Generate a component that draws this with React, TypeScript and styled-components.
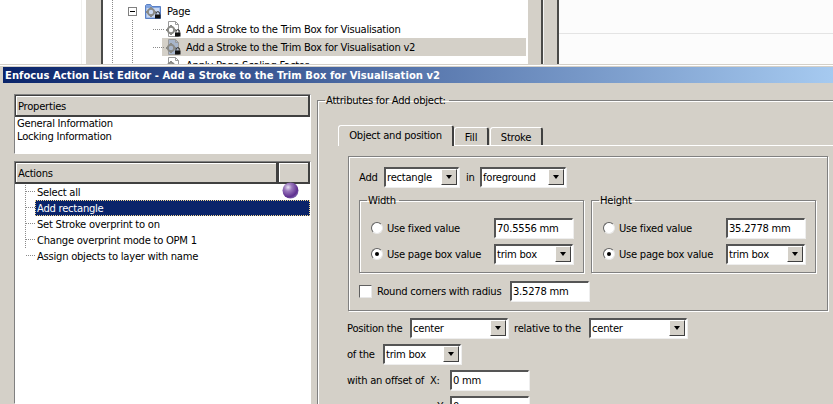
import React from "react";
import styled, { createGlobalStyle } from "styled-components";

const Global = createGlobalStyle`
  html, body { margin: 0; padding: 0; background: #d4d0c8; }
  * { box-sizing: border-box; }
`;
const Page = styled.div`
  width: 833px; height: 404px; overflow: hidden; display: flex; flex-direction: column;
  font: 10px/13px "DejaVu Sans", sans-serif; letter-spacing: -0.25px; color: #000;
`;
const BackDrop = styled.div`
  height: 64px; flex: none; display: flex; background: #fff; overflow: hidden;
`;
const BlankLeft = styled.div`width: 81px; flex: none; background: #fff; border-right: 1px solid #f0f0ee; margin-right: 4px; width: 82px;`;
const BackGutter = styled.div<{ $w: number; $edge?: boolean }>`
  width: ${p => p.$w}px; flex: none; background: #d4d0c8;
  border-right: 2px solid #4a4a48;
  ${p => (p.$edge ? "border-left: 1px solid #f4f4f2;" : "")}
`;
const Tree = styled.div`
  width: 425px; flex: none; background-color: #fff; padding-top: 2px; border-right: 2px solid #fff;
  background-image:
    repeating-linear-gradient(to bottom, #8a8a8a 0 1px, transparent 1px 2px),
    repeating-linear-gradient(to bottom, #8a8a8a 0 1px, transparent 1px 2px);
  background-size: 1px 100%, 1px 100%;
  background-position: 9px 0, 29px 20px;
  background-repeat: no-repeat;
`;
const TreeRow = styled.div<{ $selected?: boolean; $indent: number; $pad?: number }>`
  height: 18px; display: flex; align-items: center; margin-left: ${p => p.$indent}px;
  padding-left: ${p => p.$pad ?? 0}px;
  background: ${p => (p.$selected ? "#d4d0c8" : "transparent")};
  white-space: nowrap;
`;
const Expander = styled.span`
  width: 9px; height: 9px; border: 1px solid #808080; background: #fff; display: flex;
  align-items: center; justify-content: center; margin-right: 8px; flex: none;
  &::before { content: ""; width: 5px; height: 1px; background: #000; }
`;
const IconSlot = styled.span`width: 16px; height: 16px; flex: none; display: block;`;
const Dash = styled.span`
  width: 12px; height: 1px; flex: none; margin-left: -12px;
  background: repeating-linear-gradient(to right, #8a8a8a 0 1px, transparent 1px 2px);
`;
const TreeLabel = styled.span<{ $gap: number }>`margin-left: ${p => p.$gap}px;`;
const RightBack = styled.div`
  flex: 1; background: #fcfcfc; position: relative;
  &::after { content: ""; display: block; margin-top: 33px; height: 1px; background: #e4e4e4; }
`;
const Window = styled.div`
  flex: 1; min-height: 0; display: flex; flex-direction: column; background: #d4d0c8;
  padding: 1px 0 0 0; border-top: 1px solid #d4d0c8; position: relative;
  box-shadow: inset 0 1px 0 #fff;
`;
const TitleBar = styled.div`
  margin: 1px 0 0 3px; height: 16px; flex: none; display: flex; align-items: center; padding-left: 2px;
  color: #fff; font: 700 10px/13px "DejaVu Sans", sans-serif; letter-spacing: 0.05px; white-space: nowrap;
  background: linear-gradient(to right, #0a246a, #a6caf0);
`;
const Body = styled.div`
  flex: 1; min-height: 0; display: flex; padding: 11px 0 0 14px; gap: 6px; overflow: hidden;
`;
const LeftColumn = styled.div`width: 297px; flex: none; display: flex; flex-direction: column; gap: 7px;`;
const ListBox = styled.div<{ $h?: number }>`
  ${p => (p.$h ? `height: ${p.$h}px;` : "flex: 1;")}
  border: 1px solid; border-color: #808080 #fff #fff #808080; background: #fff;
  display: flex; flex-direction: column;
`;
const HeaderRow = styled.div`display: flex; height: 22px; flex: none;`;
const HeaderCell = styled.div<{ $w?: number }>`
  ${p => (p.$w ? `width: ${p.$w}px; flex: none;` : "flex: 1;")}
  background: #d4d0c8; padding: 3px 0 0 2px; line-height: 15px;
  border: 1px solid; border-color: #404040; border-width: 1px 2px 2px 1px;
  box-shadow: inset 1px 1px 0 #fff;
`;
const PlainRow = styled.div`height: 13px; padding-left: 2px; line-height: 13px; white-space: nowrap;`;
const PlainList = styled.div`margin-top: 0;`;
const ActionList = styled.div`
  flex: 1; position: relative; padding-left: 20px;
  background-image: repeating-linear-gradient(to bottom, #8a8a8a 0 1px, transparent 1px 2px);
  background-size: 1px 64px; background-position: 10px 1px; background-repeat: no-repeat;
`;
const ActionRow = styled.div<{ $selected?: boolean }>`
  height: 16px; display: flex; align-items: center; padding-left: 2px; white-space: nowrap; position: relative;
  ${p => p.$selected ? `background: #0a246a; color: #fff; outline: 1px dotted #f3d88f; outline-offset: -1px;` : ""}
  &::before {
    content: ""; position: absolute; left: -9px; top: 7px; width: 9px; height: 1px;
    background: repeating-linear-gradient(to right, #8a8a8a 0 1px, transparent 1px 2px);
  }
`;
const Sphere = styled.svg`position: absolute; right: 11px; top: -2px; width: 17px; height: 17px;`;
const RightColumn = styled.div`flex: 1; min-width: 0;`;
const Group = styled.fieldset`
  margin: 0; padding: 0; min-width: 0; border: 1px solid #808080;
  box-shadow: 1px 1px 0 #fff, inset 1px 1px 0 #fff;
`;
const Legend = styled.legend`padding: 0 3px 0 1px; line-height: 13px; height: 13px;`;
const AttributesLegend = styled(Legend)`margin-left: -13px;`;
const SizeLegend = styled(Legend)`margin-left: -3px;`;
const Attributes = styled(Group)`
  margin-right: -30px; height: 340px; padding: 19px 36px 0 20px;
`;
const TabStrip = styled.div`
  display: flex; height: 20px; align-items: flex-end; margin-right: -20px;
  border-bottom: 1px solid #fff;
`;
const Tab = styled.div<{ $active?: boolean; $w: number }>`
  width: ${p => p.$w}px; height: 18px; text-align: center; flex: none;
  line-height: 19px; background: #d4d0c8;
  border: 1px solid; border-color: #fff #404040 transparent #fff; border-width: 1px 2px 0 1px;
  border-radius: 3px 3px 0 0; margin-right: ${p => (p.$active ? 0 : 1)}px;
  ${p => p.$active ? "margin-bottom: -1px; height: 21px;" : ""}
`;
const ObjectGroup = styled.div`
  margin: 10px 0 0 10px; width: 480px; height: 155px; padding: 10px 10px 0 10px;
  border: 1px solid #808080; box-shadow: 1px 1px 0 #fff, inset 1px 1px 0 #fff;
`;
const FormRow = styled.div<{ $gap?: number; $top?: number; $left?: number }>`
  display: flex; align-items: center; gap: ${p => p.$gap ?? 0}px;
  margin-top: ${p => p.$top ?? 0}px; margin-left: ${p => p.$left ?? 0}px; white-space: nowrap;
`;
const FormLabel = styled.span<{ $w: number; $before?: number; $right?: boolean }>`
  width: ${p => p.$w}px; flex: none; margin-left: ${p => p.$before ?? 0}px;
  ${p => (p.$right ? "text-align: right; padding-right: 5px;" : "")}
`;
const Sunken = styled.div<{ $w: number }>`
  width: ${p => p.$w}px; height: 20px; flex: none; display: flex; align-items: center; background: #fff;
  border: 2px solid; border-color: #555 #fff #fff #555; border-width: 2px 1px 1px 2px;
  padding-left: 1px; box-shadow: 1px 1px 0 #eee;
  position: relative; line-height: 15px;
`;
const Arrow = styled.span`
  position: absolute; right: 1px; top: 0; bottom: 1px; width: 16px; background: #d4d0c8;
  border: 1px solid; border-color: #fff #404040 #404040 #fff;
  display: flex; align-items: center; justify-content: center;
  &::after { content: ""; border: 3.5px solid transparent; border-top: 4px solid #000; border-bottom: 0; }
`;
const SizeGroups = styled.div`display: flex; gap: 7px; margin-top: 7px;`;
const SizeGroup = styled(Group)`
  width: 225px; height: 79px; padding: 4px 0 0 10px;
`;
const Radio = styled.span<{ $on?: boolean }>`
  width: 12px; height: 12px; border-radius: 50%; background: #fff; flex: none; display: flex;
  align-items: center; justify-content: center; margin-right: 4px;
  border: 1px solid; border-color: #606060 #e8e8e8 #e8e8e8 #606060;
  &::after { content: ""; width: 4px; height: 4px; border-radius: 50%; background: ${p => (p.$on ? "#000" : "transparent")}; }
`;
const RadioText = styled.span`width: 107px; flex: none;`;
const Check = styled.span`
  width: 13px; height: 13px; background: #fff; flex: none;
  border: 1px solid; border-color: #606060 #e8e8e8 #e8e8e8 #606060;
`;
const Position = styled.div`margin-top: 7px; margin-left: 9px;`;

const Gear = () => (
  <g fill="#8a8a86">
    <circle cx="6" cy="9" r="3.2" fill="none" stroke="#8a8a86" strokeWidth="2" />
    <path d="M5 4h2v2H5zM5 12h2v2H5zM1 8h2v2H1zM9 8h2v2H9z" />
  </g>
);
const Lock = () => (
  <g>
    <path d="M11 11.500v-1a1.800 1.800 0 0 1 3.600 0v1" fill="none" stroke="#222" />
    <rect x="10" y="11.500" width="5.500" height="4" fill="#111" />
  </g>
);
const FolderIcon = () => (
  <IconSlot as="svg" viewBox="0 0 16 16">
    <path d="M.5 2.500l1-1h4l1.500 2h8.500v12h-15z" fill="#7fa3e0" stroke="#5a80c5" />
    <rect x="1.500" y="5" width="13" height="9.500" fill="#c8d8f4" />
    <Gear /><Lock />
  </IconSlot>
);
const DocIcon = ({ $dark }: { $dark?: boolean }) => (
  <IconSlot as="svg" viewBox="0 0 16 16">
    <path d="M3.500.5h7l3 3v12h-10z" fill={$dark ? "#a8b6cc" : "#fff"} stroke="#9a9a9a" />
    <path d="M10.500.5v3h3" fill="none" stroke="#9a9a9a" />
    <Gear /><Lock />
  </IconSlot>
);

const Select = ({ w, children }: { w: number; children: React.ReactNode }) => (
  <Sunken $w={w}>{children}<Arrow /></Sunken>
);

const SizeBox = ({ title, value }: { title: string; value: string }) => (
  <SizeGroup>
    <SizeLegend>{title}</SizeLegend>
    <FormRow $top={7} $left={1}>
      <Radio /><RadioText>Use fixed value</RadioText><Sunken $w={79}>{value}</Sunken>
    </FormRow>
    <FormRow $top={6} $left={1}>
      <Radio $on /><RadioText>Use page box value</RadioText><Select w={79}>trim box</Select>
    </FormRow>
  </SizeGroup>
);

export default function App() {
  return (
    <Page>
      <Global />
      <BackDrop>
        <BlankLeft />
        <BackGutter $w={17} />
        <Tree>
          <TreeRow $indent={25}><Expander /><FolderIcon /><TreeLabel $gap={6}>Page</TreeLabel></TreeRow>
          <TreeRow $indent={59} $pad={3}><Dash /><DocIcon /><TreeLabel $gap={5}>Add a Stroke to the Trim Box for Visualisation</TreeLabel></TreeRow>
          <TreeRow $indent={59} $pad={3} $selected><Dash /><DocIcon $dark /><TreeLabel $gap={5}>Add a Stroke to the Trim Box for Visualisation v2</TreeLabel></TreeRow>
          <TreeRow $indent={59} $pad={3}><Dash /><DocIcon /><TreeLabel $gap={5}>Apply Page Scaling Factor</TreeLabel></TreeRow>
        </Tree>
        <BackGutter $w={15} />
        <BackGutter $w={16} $edge />
        <RightBack />
      </BackDrop>
      <Window>
        <TitleBar>Enfocus Action List Editor - Add a Stroke to the Trim Box for Visualisation v2</TitleBar>
        <Body>
          <LeftColumn>
            <ListBox $h={60}>
              <HeaderRow><HeaderCell>Properties</HeaderCell></HeaderRow>
              <PlainList>
                <PlainRow>General Information</PlainRow>
                <PlainRow>Locking Information</PlainRow>
              </PlainList>
            </ListBox>
            <ListBox>
              <HeaderRow><HeaderCell>Actions</HeaderCell><HeaderCell $w={32} /></HeaderRow>
              <ActionList>
                <ActionRow>
                  Select all
                  <Sphere viewBox="0 0 17 17">
                    <defs>
                      <radialGradient id="orb" cx="0.35" cy="0.3" r="0.8">
                        <stop offset="0" stopColor="#e8e4f4" />
                        <stop offset="0.3" stopColor="#9a78bc" />
                        <stop offset="0.75" stopColor="#5e2f90" />
                        <stop offset="1" stopColor="#8d7cb8" />
                      </radialGradient>
                    </defs>
                    <circle cx="8.500" cy="8.500" r="8" fill="url(#orb)" />
                  </Sphere>
                </ActionRow>
                <ActionRow $selected>Add rectangle</ActionRow>
                <ActionRow>Set Stroke overprint to on</ActionRow>
                <ActionRow>Change overprint mode to OPM 1</ActionRow>
                <ActionRow>Assign objects to layer with name</ActionRow>
              </ActionList>
            </ListBox>
          </LeftColumn>
          <RightColumn>
            <Attributes>
              <AttributesLegend>Attributes for Add object:</AttributesLegend>
              <TabStrip>
                <Tab $active $w={116}>Object and position</Tab>
                <Tab $w={35}>Fill</Tab>
                <Tab $w={53}>Stroke</Tab>
              </TabStrip>
              <ObjectGroup>
                <FormRow>
                  <FormLabel $w={25}>Add</FormLabel>
                  <Select w={75}>rectangle</Select>
                  <FormLabel $w={14} $before={7}>in</FormLabel>
                  <Select w={86}>foreground</Select>
                </FormRow>
                <SizeGroups>
                  <SizeBox title="Width" value="70.5556 mm" />
                  <SizeBox title="Height" value="35.2778 mm" />
                </SizeGroups>
                <FormRow $top={8}>
                  <Check />
                  <FormLabel $w={133} $before={5}>Round corners with radius</FormLabel>
                  <Sunken $w={79}>3.5278 mm</Sunken>
                </FormRow>
              </ObjectGroup>
              <Position>
                <FormRow>
                  <FormLabel $w={63}>Position the</FormLabel>
                  <Select w={98}>center</Select>
                  <FormLabel $w={75} $before={6}>relative to the</FormLabel>
                  <Select w={98}>center</Select>
                </FormRow>
                <FormRow $top={6}>
                  <FormLabel $w={36}>of the</FormLabel>
                  <Select w={78}>trim box</Select>
                </FormRow>
                <FormRow $top={6}>
                  <FormLabel $w={103}>with an offset of&nbsp; X:</FormLabel>
                  <Sunken $w={79}>0 mm</Sunken>
                </FormRow>
                <FormRow $top={6}>
                  <FormLabel $w={103} $right>Y:</FormLabel>
                  <Sunken $w={79}>0 mm</Sunken>
                </FormRow>
              </Position>
            </Attributes>
          </RightColumn>
        </Body>
      </Window>
    </Page>
  );
}
